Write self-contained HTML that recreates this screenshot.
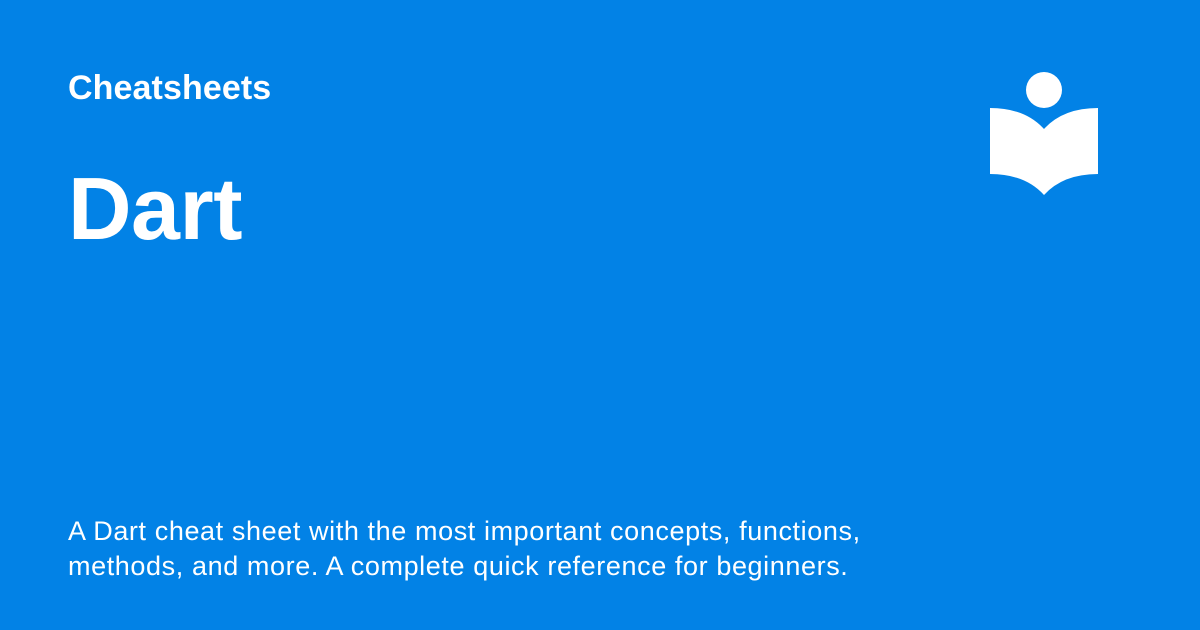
<!DOCTYPE html>
<html><head><meta charset="utf-8"><style>
html,body{margin:0;padding:0}
body{width:1200px;height:630px;background:#0282e6;position:relative;overflow:hidden;font-family:"Liberation Sans",Arial,sans-serif;color:#fff}
.t{position:absolute;left:68px;white-space:nowrap}
#c{top:69px;font-size:34px;font-weight:bold;letter-spacing:0.1px}
#d{top:158px;font-size:88px;font-weight:bold;letter-spacing:-0.5px}
#p{top:514px;font-size:27px;line-height:35px;letter-spacing:0.6px}
svg{position:absolute;left:0;top:0}
</style></head><body>
<div class="t" id="c">Cheatsheets</div>
<div class="t" id="d">Dart</div>
<div class="t" id="p">A Dart cheat sheet with the most important concepts, functions,<br>methods, and more. A complete quick reference for beginners.</div>
<svg width="1200" height="630">
<circle cx="1044" cy="90" r="18" fill="#fff"/>
<path d="M990 108 Q1025 108 1044 129 Q1063 108 1098 108 L1098 174 Q1063 174 1044 195 Q1025 174 990 174 Z" fill="#fff"/>
</svg>
</body></html>
